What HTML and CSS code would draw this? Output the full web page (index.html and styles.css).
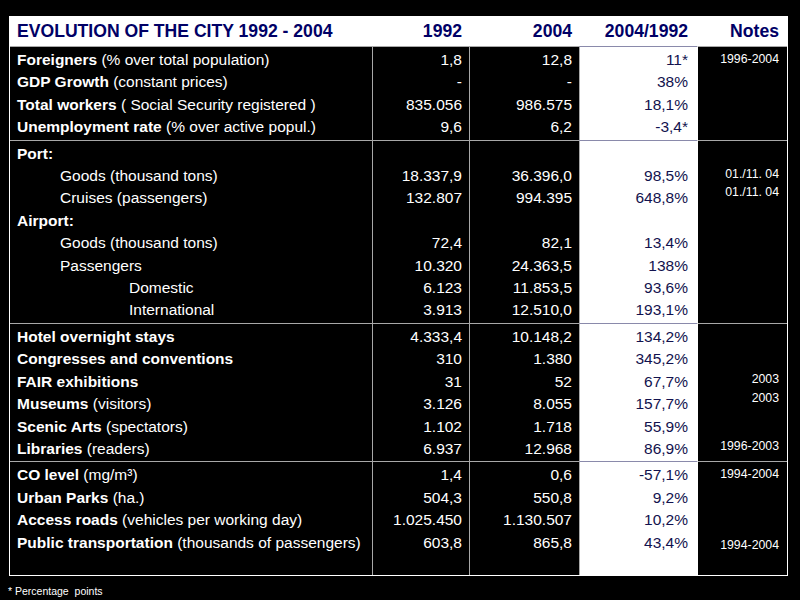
FILE: index.html
```html
<!DOCTYPE html>
<html lang="en">
<head>
<meta charset="utf-8">
<title>Evolution of the city 1992 - 2004</title>
<link rel="stylesheet" href="styles.css">
</head>
<body>
<div class="page">
<table class="city">
  <colgroup>
    <col class="c-label"><col class="c-y1"><col class="c-y2"><col class="c-ratio"><col class="c-note">
  </colgroup>
  <thead>
    <tr><th class="label">EVOLUTION OF THE CITY 1992 - 2004</th><th>1992</th><th>2004</th><th class="h-ratio">2004/1992</th><th class="h-note">Notes</th></tr>
  </thead>
  <tbody>
    <tr class="first"><td class="label"><b>Foreigners</b> (% over total population)</td><td>1,8</td><td>12,8</td><td class="ratio">11*</td><td class="note"><span class="up2">1996-2004</span></td></tr>
    <tr><td class="label"><b>GDP Growth</b> (constant prices)</td><td>-</td><td>-</td><td class="ratio">38%</td><td class="note"></td></tr>
    <tr><td class="label"><b>Total workers</b> ( Social Security registered )</td><td>835.056</td><td>986.575</td><td class="ratio">18,1%</td><td class="note"></td></tr>
    <tr class="last"><td class="label"><b>Unemployment rate</b> (% over active popul.)</td><td>9,6</td><td>6,2</td><td class="ratio">-3,4*</td><td class="note"></td></tr>

    <tr class="first"><td class="label"><b>Port:</b></td><td></td><td></td><td class="ratio"></td><td class="note"></td></tr>
    <tr><td class="label ind1">Goods (thousand tons)</td><td>18.337,9</td><td>36.396,0</td><td class="ratio">98,5%</td><td class="note"><span class="up3">01./11. 04</span></td></tr>
    <tr><td class="label ind1">Cruises (passengers)</td><td>132.807</td><td>994.395</td><td class="ratio">648,8%</td><td class="note"><span class="up7">01./11. 04</span></td></tr>
    <tr><td class="label"><b>Airport:</b></td><td></td><td></td><td class="ratio"></td><td class="note"></td></tr>
    <tr><td class="label ind1">Goods (thousand tons)</td><td>72,4</td><td>82,1</td><td class="ratio">13,4%</td><td class="note"></td></tr>
    <tr><td class="label ind1">Passengers</td><td>10.320</td><td>24.363,5</td><td class="ratio">138%</td><td class="note"></td></tr>
    <tr><td class="label ind2">Domestic</td><td>6.123</td><td>11.853,5</td><td class="ratio">93,6%</td><td class="note"></td></tr>
    <tr class="last"><td class="label ind2">International</td><td>3.913</td><td>12.510,0</td><td class="ratio">193,1%</td><td class="note"></td></tr>

    <tr class="first"><td class="label"><b>Hotel overnight stays</b></td><td>4.333,4</td><td>10.148,2</td><td class="ratio">134,2%</td><td class="note"></td></tr>
    <tr><td class="label"><b>Congresses and conventions</b></td><td>310</td><td>1.380</td><td class="ratio">345,2%</td><td class="note"></td></tr>
    <tr><td class="label"><b>FAIR exhibitions</b></td><td>31</td><td>52</td><td class="ratio">67,7%</td><td class="note"><span class="up4">2003</span></td></tr>
    <tr><td class="label"><b>Museums</b> (visitors)</td><td>3.126</td><td>8.055</td><td class="ratio">157,7%</td><td class="note"><span class="up7">2003</span></td></tr>
    <tr><td class="label"><b>Scenic Arts</b> (spectators)</td><td>1.102</td><td>1.718</td><td class="ratio">55,9%</td><td class="note"></td></tr>
    <tr class="last"><td class="label"><b>Libraries</b> (readers)</td><td>6.937</td><td>12.968</td><td class="ratio">86,9%</td><td class="note"><span class="up3">1996-2003</span></td></tr>

    <tr class="first"><td class="label"><b>CO level</b> (mg/m³)</td><td>1,4</td><td>0,6</td><td class="ratio">-57,1%</td><td class="note"><span class="up2">1994-2004</span></td></tr>
    <tr><td class="label"><b>Urban Parks</b> (ha.)</td><td>504,3</td><td>550,8</td><td class="ratio">9,2%</td><td class="note"></td></tr>
    <tr><td class="label"><b>Access roads</b> (vehicles per working day)</td><td>1.025.450</td><td>1.130.507</td><td class="ratio">10,2%</td><td class="note"></td></tr>
    <tr class="end"><td class="label"><b>Public transportation</b> (thousands of passengers)</td><td>603,8</td><td>865,8</td><td class="ratio">43,4%</td><td class="note"><span class="dn1">1994-2004</span></td></tr>
  </tbody>
</table>
<p class="footnote">* Percentage&nbsp; points</p>
</div>
</body>
</html>
```

FILE: styles.css
```css
* { box-sizing: border-box; }

html, body {
  margin: 0;
  padding: 0;
  background: #000;
}

body {
  font-family: "Liberation Sans", Arial, sans-serif;
  color: #fff;
}

.page {
  padding: 16px 0 0 9px;
}

.city {
  width: 779px;
  table-layout: fixed;
  border-collapse: separate;
  border-spacing: 0;
  border-left: 1px solid #fff;
  border-right: 1px solid #fff;
  border-bottom: 1px solid #fff;
}

.c-label { width: 362px; }
.c-y1 { width: 97px; }
.c-y2 { width: 110px; }
.c-ratio { width: 118px; }
.c-note { width: 90px; }

.city th {
  background: #fff;
  color: #000066;
  font-size: 17.6px;
  font-weight: bold;
  height: 30px;
  line-height: 30px;
  padding: 0 7px 0 0;
  text-align: right;
  white-space: nowrap;
}

.city th.label {
  text-align: left;
  padding: 0 0 0 7px;
}

.city th.h-ratio { padding-right: 9px; }
.city th.h-note { padding-right: 8px; }

.city td {
  font-size: 15.5px;
  line-height: 22.4px;
  padding: 0 7px 0 0;
  text-align: right;
  white-space: nowrap;
  border-left: 1px solid #a8a8a8;
  vertical-align: baseline;
}

.city td.label {
  text-align: left;
  padding-left: 7px;
  border-left: 0;
}

.city td.ind1 { padding-left: 50px; }
.city td.ind2 { padding-left: 119px; }

.city td.ratio {
  background: #fff;
  color: #12124e;
  padding-right: 9px;
}

.city td.note {
  border-left-color: #fff;
  padding-right: 8px;
}

.note span {
  font-size: 12.3px;
  line-height: 10px;
  display: inline-block;
}

.note .up2 { vertical-align: 2px; }
.note .up3 { vertical-align: 3.5px; }
.note .up4 { vertical-align: 4px; }
.note .up7 { vertical-align: 7px; }
.note .dn1 { vertical-align: -1px; }

.city tr.first td {
  border-top: 1px solid #a8a8a8;
  padding-top: 2px;
}

.city tr.first td.ratio {
  border-top-color: #8a8aab;
}

.city tr.last td { padding-bottom: 1px; }
.city tr.end td { padding-bottom: 21px; }

.footnote {
  margin: 9px 0 0 -1px;
  font-size: 10.5px;
  line-height: 12px;
}
```
